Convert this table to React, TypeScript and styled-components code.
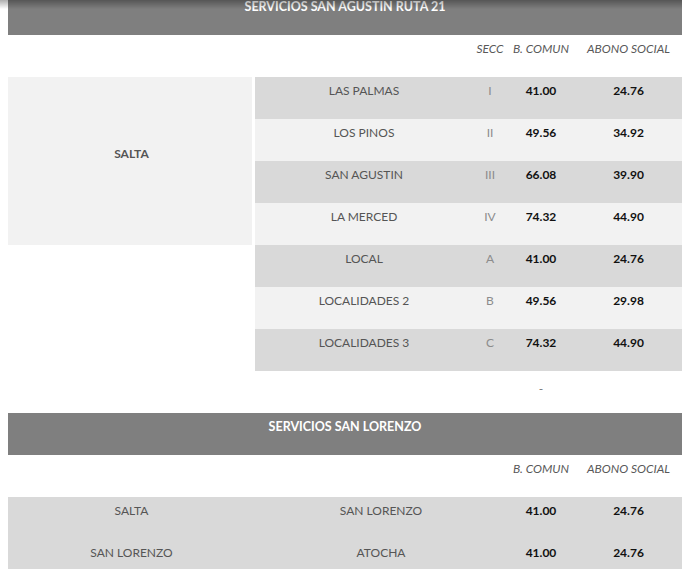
import React from "react";
import styled, { createGlobalStyle } from "styled-components";

const GlobalStyle = createGlobalStyle`
  html, body {
    margin: 0;
    padding: 0;
    background: #fff;
    overflow: hidden;
  }
  body {
    padding-left: 8px;
    font-family: Lato, "Liberation Sans", sans-serif;
  }
`;

const TopShade = styled.div`
  position: fixed;
  top: 0;
  left: 0;
  right: 0;
  height: 9px;
  background: linear-gradient(rgba(0, 0, 0, 0.32), rgba(0, 0, 0, 0));
  pointer-events: none;
`;

const Table = styled.table`
  width: 674px;
  margin-top: -7px;
  border-collapse: collapse;
  border-spacing: 0;
  table-layout: fixed;
`;

type Tone = "dark" | "light" | "none";
type Kind = "name" | "city" | "secc" | "num" | "label" | "dash";

const tones: Record<Tone, string> = {
  dark: "#d9d9d9",
  light: "#f2f2f2",
  none: "transparent",
};

const kinds: Record<Kind, string> = {
  name: "color: #555; font-weight: 400;",
  city: "color: #555; font-weight: 700;",
  secc: "color: #8c8c8c; font-weight: 400;",
  num: "color: #111; font-weight: 700;",
  label: "color: #595959; font-style: italic; font-weight: 400;",
  dash: "color: #777; font-weight: 400; padding-top: 9px; padding-bottom: 15px;",
};

const Cell = styled.td<{ $tone?: Tone; $kind?: Kind; $gap?: boolean }>`
  height: 42px;
  box-sizing: border-box;
  padding: 5px 2px 19px;
  vertical-align: middle;
  text-align: center;
  font-size: 12px;
  line-height: 18px;
  white-space: nowrap;
  background: ${(p) => tones[p.$tone || "none"]};
  ${(p) => kinds[p.$kind || "name"]}
  ${(p) => (p.$gap ? "box-shadow: inset -3px 0 0 #fff;" : "")}
`;

const TitleCell = styled.td`
  height: 42px;
  box-sizing: border-box;
  padding: 5px 2px 19px;
  background: #7f7f7f;
  color: #fff;
  font-size: 12.5px;
  line-height: 18px;
  font-weight: 700;
  text-align: center;
`;

const rutaRows = [
  { name: "LAS PALMAS", secc: "I", comun: "41.00", abono: "24.76" },
  { name: "LOS PINOS", secc: "II", comun: "49.56", abono: "34.92" },
  { name: "SAN AGUSTIN", secc: "III", comun: "66.08", abono: "39.90" },
  { name: "LA MERCED", secc: "IV", comun: "74.32", abono: "44.90" },
  { name: "LOCAL", secc: "A", comun: "41.00", abono: "24.76" },
  { name: "LOCALIDADES 2", secc: "B", comun: "49.56", abono: "29.98" },
  { name: "LOCALIDADES 3", secc: "C", comun: "74.32", abono: "44.90" },
];

const lorenzoRows = [
  { from: "SALTA", to: "SAN LORENZO", comun: "41.00", abono: "24.76" },
  { from: "SAN LORENZO", to: "ATOCHA", comun: "41.00", abono: "24.76" },
];

const App: React.FC = () => {
  return (
    <>
      <GlobalStyle />
      <Table>
        <colgroup>
          <col style={{ width: 247 }} />
          <col style={{ width: 218 }} />
          <col style={{ width: 34 }} />
          <col style={{ width: 68 }} />
          <col style={{ width: 107 }} />
        </colgroup>
        <tbody>
          <tr>
            <TitleCell colSpan={5}>SERVICIOS SAN AGUSTIN RUTA 21</TitleCell>
          </tr>
          <tr>
            <Cell />
            <Cell />
            <Cell $kind="label">SECC</Cell>
            <Cell $kind="label">B. COMUN</Cell>
            <Cell $kind="label">ABONO SOCIAL</Cell>
          </tr>
          {rutaRows.map((row, i) => {
            const tone: Tone = i % 2 === 0 ? "dark" : "light";
            return (
              <tr key={row.name}>
                {i === 0 && (
                  <Cell rowSpan={4} $tone="light" $kind="city" $gap>
                    SALTA
                  </Cell>
                )}
                {i === 4 && <Cell rowSpan={3} />}
                <Cell $tone={tone}>{row.name}</Cell>
                <Cell $tone={tone} $kind="secc">
                  {row.secc}
                </Cell>
                <Cell $tone={tone} $kind="num">
                  {row.comun}
                </Cell>
                <Cell $tone={tone} $kind="num">
                  {row.abono}
                </Cell>
              </tr>
            );
          })}
          <tr>
            <Cell />
            <Cell />
            <Cell />
            <Cell $kind="dash">-</Cell>
            <Cell />
          </tr>
          <tr>
            <TitleCell colSpan={5}>SERVICIOS SAN LORENZO</TitleCell>
          </tr>
          <tr>
            <Cell />
            <Cell colSpan={2} />
            <Cell $kind="label">B. COMUN</Cell>
            <Cell $kind="label">ABONO SOCIAL</Cell>
          </tr>
          {lorenzoRows.map((row) => (
            <tr key={row.from}>
              <Cell $tone="dark">{row.from}</Cell>
              <Cell $tone="dark" colSpan={2}>
                {row.to}
              </Cell>
              <Cell $tone="dark" $kind="num">
                {row.comun}
              </Cell>
              <Cell $tone="dark" $kind="num">
                {row.abono}
              </Cell>
            </tr>
          ))}
        </tbody>
      </Table>
      <TopShade />
    </>
  );
};

export default App;
